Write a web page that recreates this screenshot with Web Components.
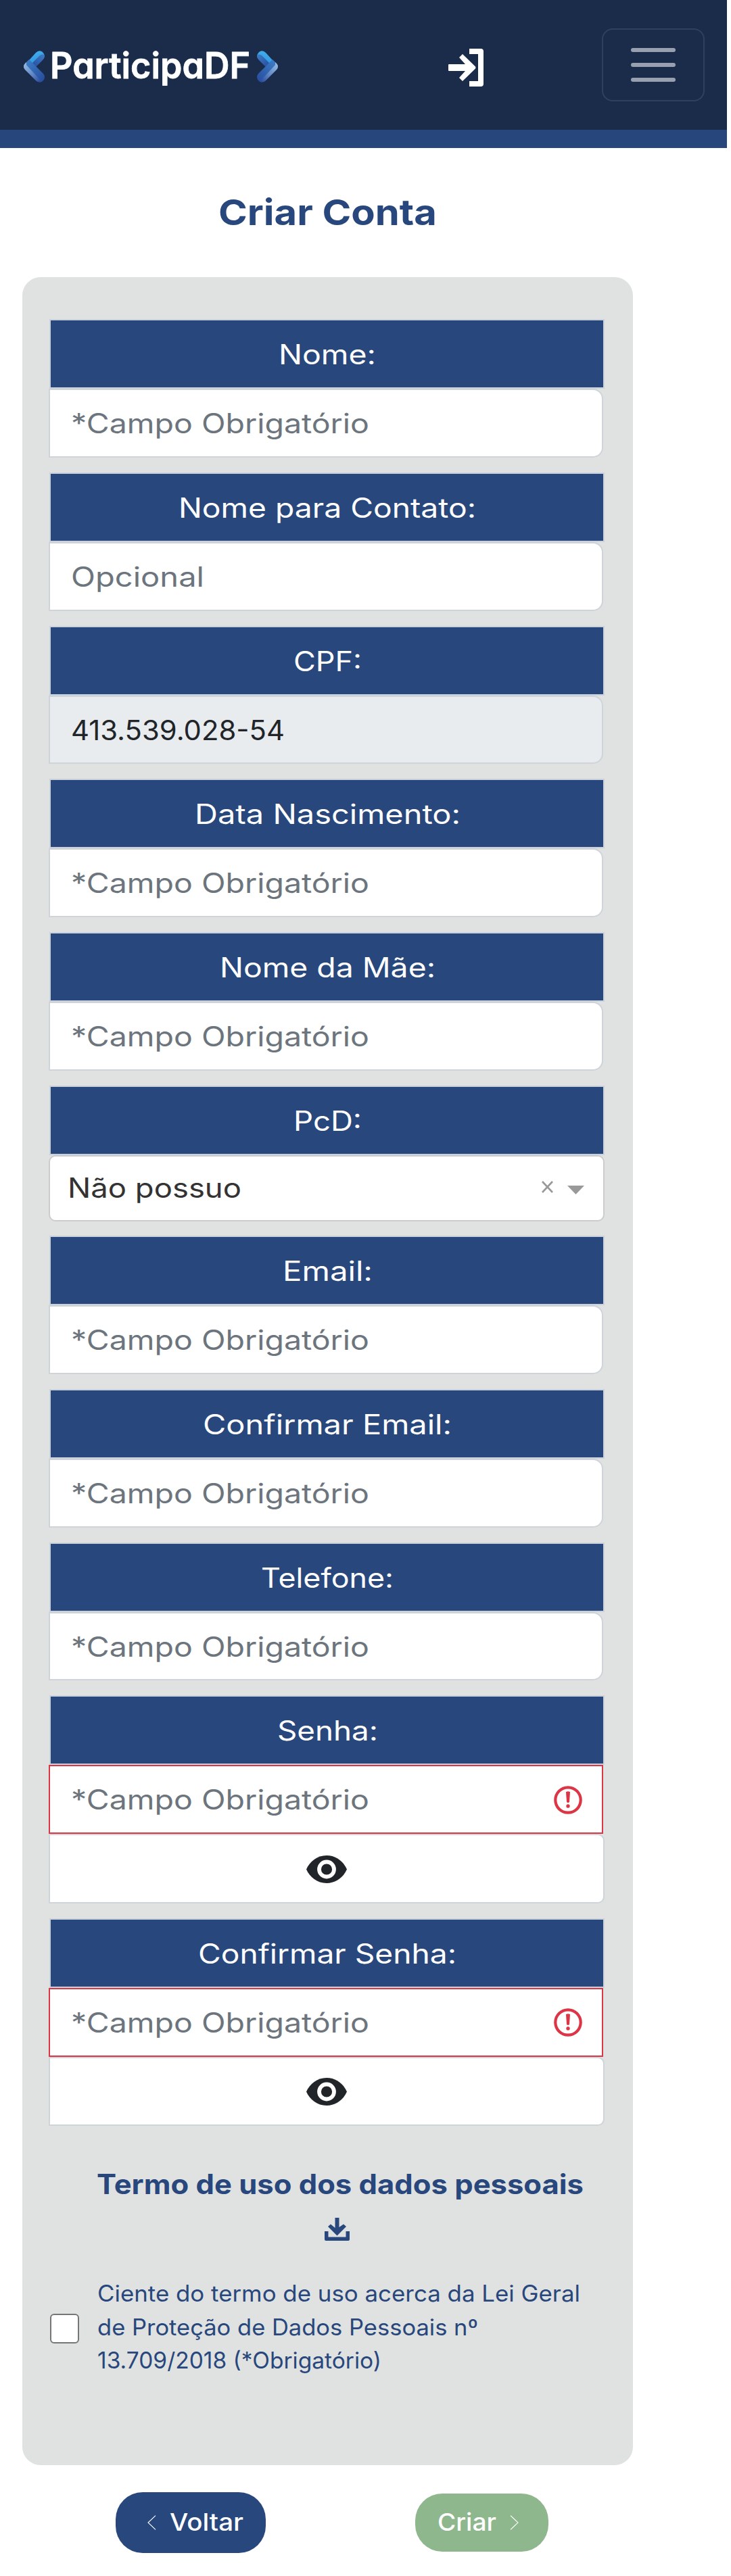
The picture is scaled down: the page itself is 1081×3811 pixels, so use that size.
<!DOCTYPE html>
<html lang="pt-BR">
<head>
<meta charset="utf-8">
<title>Participa DF - Criar Conta</title>
<style>
html,body{margin:0;background:#fff}
body{width:1081px;height:3811px;overflow:hidden;font-family:Inter,"Open Sans",sans-serif;font-size:40.5px;color:#28477c}
</style>
</head>
<body>
<participa-page></participa-page>
<script>
const define=(name,html,after)=>customElements.define(name,class extends HTMLElement{
  connectedCallback(){
    if(!this.shadowRoot){
      const t=document.createElement('template');
      t.innerHTML=typeof html==='function'?html(this):html;
      this.attachShadow({mode:'open'}).append(t.content.cloneNode(true));
    }
    if(after)after(this);
  }
});

/* One line of text, widened so that its advance equals the "w" attribute. */
define('fit-text','<style>:host{display:block;white-space:nowrap;flex:none}span{display:inline-block;transform-origin:0 50%}</style><span><slot></slot></span>',el=>{
  const s=el.shadowRoot.querySelector('span'),w=+el.getAttribute('w');
  el.style.width=w+'px';
  s.style.transform='none';
  s.style.transform='scaleX('+(w/s.getBoundingClientRect().width).toFixed(4)+')';
});

define('brand-chevron',`<style>:host{display:block;width:31px;height:47px}:host([flip]){transform:scaleX(-1)}svg{display:block}</style>
<svg width="31" height="47" viewBox="0 0 31 47"><defs>
<linearGradient id="a" x1="0" y1="0" x2="0.3" y2="1"><stop offset="0" stop-color="#46b4ee"/><stop offset="1" stop-color="#2b8ddb"/></linearGradient>
<linearGradient id="b" x1="1" y1="0" x2="0" y2="1"><stop offset="0" stop-color="#3f7cc6"/><stop offset="1" stop-color="#254c9c"/></linearGradient>
<linearGradient id="c" x1="0" y1="0" x2="1" y2="1"><stop offset="0" stop-color="#3f83cb"/><stop offset="1" stop-color="#264a9b"/></linearGradient>
<linearGradient id="d" x1="0" y1="0" x2="1" y2="1"><stop offset="0" stop-color="#9dbfe6"/><stop offset=".55" stop-color="#6189c6"/><stop offset="1" stop-color="#27479a"/></linearGradient></defs>
<path d="M8 14 18 3Q23-2 28 2 32 6 30 11L16 25Z" fill="url(#a)"/>
<path d="M13 18 24 7Q29 4 31 7 31 11 28 14L17 25Z" fill="url(#b)"/>
<path d="M8 13 29 34Q33 39 29 44 25 49 19 45L2 28Q-2 23 2 19Z" fill="url(#c)"/>
<path d="M4 17 4 21 26 45Q22 48 18 44L2 28Q-2 23 2 19Z" fill="url(#d)"/></svg>`);

define('brand-logo',`<style>:host{display:flex;align-items:flex-start;height:70px;color:#fff}
fit-text{font-size:53px;line-height:64px;font-weight:600;font-feature-settings:"cv11";margin:-10px 10px 0 8px;-webkit-text-stroke:.8px #fff}</style>
<brand-chevron></brand-chevron><fit-text w="296">ParticipaDF</fit-text><brand-chevron flip></brand-chevron>`);

define('site-header',`<style>
:host{display:flex;box-sizing:border-box;width:1075px;height:219px;background:#1a2c4a;border-bottom:27px solid #27477c;padding:0 33px 0 35px}
brand-logo{margin-top:75px;width:376px}
.login{margin:72px 0 0 252px;width:52px;height:56px;display:block}
.menu{margin:42px 0 0 175px;width:152px;height:108px;box-sizing:border-box;border:2px solid #31415d;border-radius:16px;display:flex;flex-direction:column;align-items:center;padding-top:27px;gap:16px}
.menu i{width:66px;height:6px;border-radius:3px;background:#989fae}
</style>
<brand-logo></brand-logo>
<svg class="login" viewBox="0 0 52 56"><path d="M31 0H48Q52 0 52 4V52Q52 56 48 56H31V48H44V8H31Z" fill="#fff"/><path d="M1 23H25L16 13 21 8 40 26.500Q41 28 40 29.500L21 48 16 43 25 33H1Q0 33 0 32V24Q0 23 1 23Z" fill="#fff"/></svg>
<div class="menu"><i></i><i></i><i></i></div>`);

define('form-field',el=>{
  const k=el.getAttribute('kind')||'input';
  let body='';
  const text=`<fit-text w="${el.getAttribute('vw')}">${el.getAttribute('value')}</fit-text>`;
  if(k==='select') body=`<div class="box select">${text}<svg width="64" height="22" viewBox="0 0 64 22"><path d="M2 3 17 19M17 3 2 19" stroke="#999" stroke-width="2.600"/><path d="M39 9H64L51.500 22Z" fill="#999"/></svg></div>`;
  else if(k==='password') body=`<div class="box error">${text}<svg width="42" height="42" viewBox="0 0 42 42"><circle cx="21" cy="21" r="18.700" fill="none" stroke="#dc3545" stroke-width="4.200"/><path d="M18 9Q21 7.500 24 9L23 24Q21 26 19 24Z" fill="#dc3545"/><circle cx="21" cy="30" r="2.700" fill="#dc3545"/></svg></div>
  <div class="box eye"><svg width="60" height="41" viewBox="0 0 60 41"><path d="M0 20.500C5 9 16 0 30 0S55 9 60 20.500C55 32 44 41 30 41S5 32 0 20.500Z" fill="#212529"/><circle cx="30" cy="20.500" r="11" fill="#212529" stroke="#fff" stroke-width="5.800"/></svg></div>`;
  else body=`<div class="box ${k}">${text}</div>`;
  return `<style>
:host{display:block;margin-bottom:22px;font-weight:370}
:host([kind=select]){margin-bottom:21.200px}
.label{box-sizing:border-box;width:821px;height:103px;background:#28477c;border:2px solid #cbd2dc;color:#fff;display:flex;justify-content:center;line-height:100px;padding:1px 0 0 1px}
.box{box-sizing:border-box;width:820px;height:101.800px;margin-left:-1px;background:#fff;border:2px solid #ced4da;border-radius:0 15px 15px 0;display:flex;justify-content:space-between;color:#6c757d;line-height:99px;padding-left:31px}
.disabled{background:#e9ecef;color:#212529}
.select{width:822px;height:97.800px;border-color:#ccc;border-radius:10px;color:#333;padding-left:26px;padding-right:28px;line-height:94px}
.select svg{margin-top:34px}
.error{height:102.100px;border-color:#dc3545;border-radius:0;padding-right:29px}
.error svg{margin-top:28.500px}
.eye{width:822px;height:102.100px;border-radius:0 10px 10px 0;padding:0;justify-content:center}
.eye svg{margin-top:29.500px}
</style><div class="label"><fit-text w="${el.getAttribute('lw')}">${el.getAttribute('label')}</fit-text></div>${body}`;
});

define('terms-block',`<style>
:host{display:block;padding-top:35px;height:445.500px;box-sizing:border-box}
b{display:block;line-height:60px;margin-left:70px;font-weight:700}
.dl{display:block;margin:19px 0 0 407px}
.row{display:flex;margin-top:54px;font-size:33.300px;font-weight:400;line-height:49.800px}
.row i{box-sizing:border-box;width:43px;height:44px;border:2.500px solid #767676;border-radius:6px;background:#fff;margin:54px 27px 0 1px}
</style>
<b><fit-text w="720">Termo de uso dos dados pessoais</fit-text></b>
<svg class="dl" width="37" height="34" viewBox="0 0 37 34"><path d="M15.500 0H21.500V14L28 9.500 32 13 18.500 26.500 5 13 9 9.500 15.500 15ZM0 20H5.500V28.500H31.500V20H37V32Q37 34 35 34H2Q0 34 0 32Z" fill="#28477c"/></svg>
<div class="row"><i></i><div>
<fit-text w="714">Ciente do termo de uso acerca da Lei Geral</fit-text>
<fit-text w="563">de Proteção de Dados Pessoais nº</fit-text>
<fit-text w="420">13.709/2018 (*Obrigatório)</fit-text></div></div>`);

define('pill-button',el=>`<style>
:host{box-sizing:border-box;display:flex;align-items:center;width:222px;height:90px;border-radius:40px;background:#28477c;color:#fff;font-size:35.300px;font-weight:480;padding-left:47px;gap:20px}
:host([next]){width:197.500px;height:86px;background:#8fb78d;flex-direction:row-reverse;justify-content:flex-end;padding-left:33px;gap:20px}
:host([next]) svg{transform:scaleX(-1)}
fit-text{line-height:60px;margin-top:-1px}
svg{flex:none}
</style><svg width="13" height="22" viewBox="0 0 13 22"><path d="M12 .7 1 11 12 21.300" fill="none" stroke="#fff" stroke-width="1.100"/></svg><fit-text w="${el.getAttribute('w')}">${el.getAttribute('text')}</fit-text>`);

define('participa-page',`<style>
:host{display:block}
main{width:969px}
h1{margin:0;height:191px;box-sizing:border-box;padding-top:65px;font-size:52.500px;line-height:60px;font-weight:700;display:flex;justify-content:center}
.panel{box-sizing:border-box;width:903px;height:3236.500px;margin-left:33px;background:#e0e2e1;border-radius:27px;padding:62px 0 0 40px}
.actions{display:flex;align-items:center;height:90px;margin-top:40.500px;padding-left:171px;gap:220.500px}
</style>
<site-header></site-header>
<main>
<h1><fit-text w="323">Criar Conta</fit-text></h1>
<div class="panel">
<form-field label="Nome:" lw="144" value="*Campo Obrigatório" vw="441"></form-field>
<form-field label="Nome para Contato:" lw="440" value="Opcional" vw="197"></form-field>
<form-field label="CPF:" lw="101" kind="disabled" value="413.539.028-54" vw="316"></form-field>
<form-field label="Data Nascimento:" lw="393" value="*Campo Obrigatório" vw="441"></form-field>
<form-field label="Nome da Mãe:" lw="319" value="*Campo Obrigatório" vw="441"></form-field>
<form-field label="PcD:" lw="101" kind="select" value="Não possuo" vw="257"></form-field>
<form-field label="Email:" lw="133" value="*Campo Obrigatório" vw="441"></form-field>
<form-field label="Confirmar Email:" lw="368" value="*Campo Obrigatório" vw="441"></form-field>
<form-field label="Telefone:" lw="196" value="*Campo Obrigatório" vw="441"></form-field>
<form-field label="Senha:" lw="149" kind="password" value="*Campo Obrigatório" vw="441"></form-field>
<form-field label="Confirmar Senha:" lw="382" kind="password" value="*Campo Obrigatório" vw="441"></form-field>
<terms-block></terms-block>
</div>
<div class="actions"><pill-button text="Voltar" w="109"></pill-button><pill-button next text="Criar" w="87"></pill-button></div>
</main>`);
</script>
</body>
</html>
